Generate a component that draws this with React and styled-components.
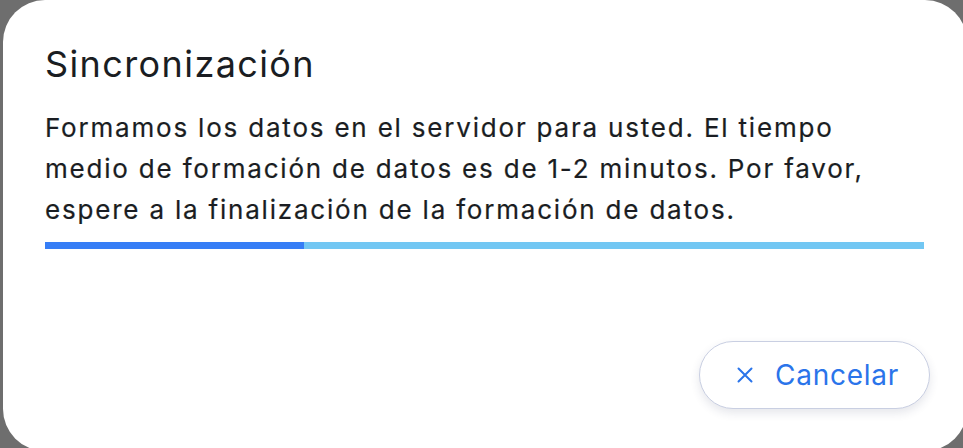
import React from "react";
import styled, { createGlobalStyle } from "styled-components";

const Global = createGlobalStyle`
  html, body {
    margin: 0;
    padding: 0;
    overflow: hidden;
    background: #6e6e6e;
  }
  body {
    font-family: Inter, "Noto Sans", sans-serif;
  }
`;

const Stage = styled.div`
  width: 963px;
  height: 448px;
  overflow: hidden;
  background: #6e6e6e;
  padding-left: 3px;
  box-sizing: border-box;
`;

const Card = styled.div`
  width: 964px;
  height: 451px;
  background: #ffffff;
  border-radius: 42px;
  box-sizing: border-box;
  padding: 40px 37px 0 42px;
  display: flex;
  flex-direction: column;
`;

const Title = styled.h2`
  margin: 0;
  font-size: 36px;
  line-height: 48px;
  font-weight: 400;
  letter-spacing: 1.4px;
  color: #1a1d22;
`;

const Message = styled.p`
  margin: 19px 0 0;
  font-size: 26px;
  line-height: 41px;
  font-weight: 400;
  letter-spacing: 1.8px;
  color: #1a1d22;
  max-width: 850px;
  -webkit-text-stroke: 0.2px #1a1d22;
`;

const Track = styled.div`
  margin-top: 12px;
  width: 879px;
  height: 7px;
  background: #72c7f3;
  display: flex;
`;

const Fill = styled.div`
  height: 100%;
  background: #367ef6;
`;

const Footer = styled.div`
  margin-top: 92px;
  display: flex;
  justify-content: flex-end;
`;

const CancelButton = styled.button`
  height: 68px;
  width: 231px;
  box-sizing: border-box;
  border: 1px solid #c9cfe2;
  border-radius: 34px;
  background: #ffffff;
  box-shadow: 0 4px 10px rgba(40, 50, 90, 0.12);
  display: flex;
  align-items: center;
  justify-content: flex-start;
  gap: 22px;
  font-family: Inter, "Noto Sans", sans-serif;
  font-size: 28px;
  letter-spacing: 0.75px;
  color: #2a74ea;
  cursor: pointer;
  padding: 0 0 0 37px;
`;

const XIcon = () => (
  <svg width="16" height="16" viewBox="0 0 16 16" fill="none">
    <path d="M1.5 1.5 L14.5 14.5 M14.5 1.5 L1.5 14.5" stroke="#2a74ea" strokeWidth="2" strokeLinecap="round" />
  </svg>
);

export default function App() {
  const progress = 29.5;
  return (
    <Stage>
      <Global />
      <Card>
        <Title>Sincronización</Title>
        <Message>
          Formamos los datos en el servidor para usted. El tiempo medio de formación de datos es de 1-2 minutos. Por favor, espere a la finalización de la formación de datos.
        </Message>
        <Track>
          <Fill style={{ width: `${progress}%` }} />
        </Track>
        <Footer>
          <CancelButton>
            <XIcon />
            Cancelar
          </CancelButton>
        </Footer>
      </Card>
    </Stage>
  );
}
